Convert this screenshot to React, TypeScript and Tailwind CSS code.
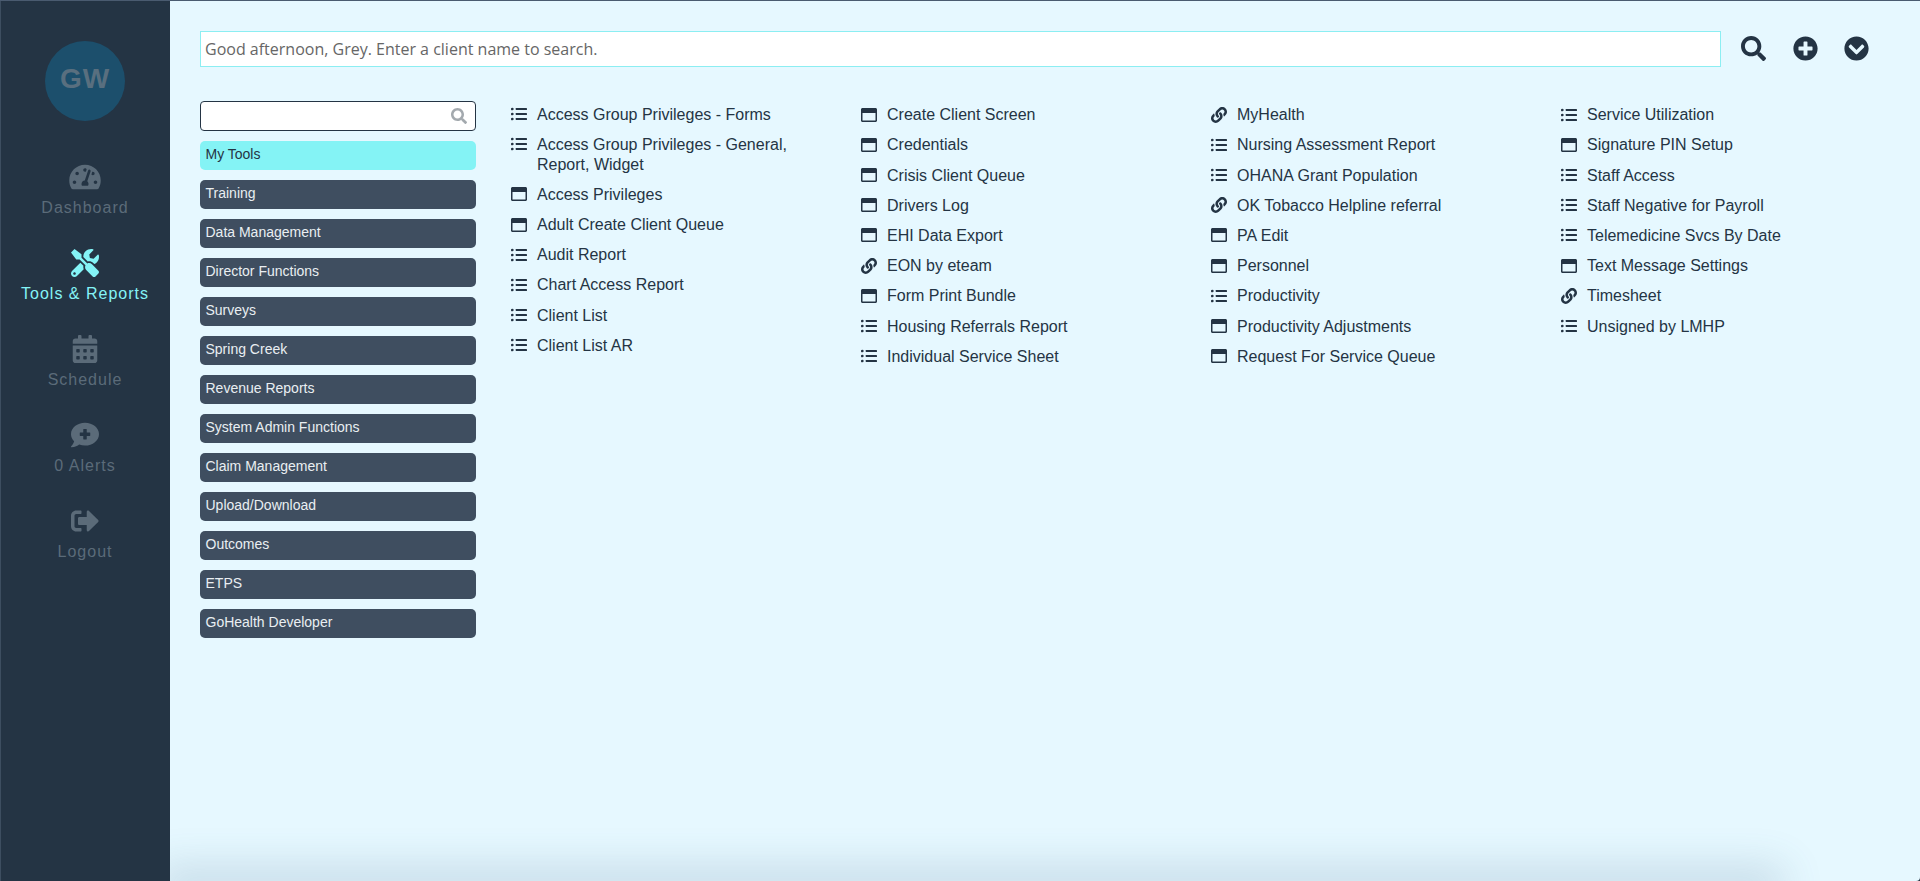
import { FaTachometerAlt, FaTools, FaCalendarAlt, FaCommentMedical, FaSignOutAlt, FaSearch, FaPlusCircle, FaChevronCircleDown, FaRegWindowMaximize, FaLink } from "react-icons/fa";

type Kind = "list" | "win" | "link";
type Row = [Kind, string];

const columns: { rows: Row[]; spacing: string }[] = [
  {
    spacing: "pt-[3.7px]",
    rows: [
      ["list", "Access Group Privileges - Forms"],
      ["list", "Access Group Privileges - General, Report, Widget"],
      ["win", "Access Privileges"],
      ["win", "Adult Create Client Queue"],
      ["list", "Audit Report"],
      ["list", "Chart Access Report"],
      ["list", "Client List"],
      ["list", "Client List AR"],
    ],
  },
  {
    spacing: "pt-[4.2px]",
    rows: [
      ["win", "Create Client Screen"],
      ["win", "Credentials"],
      ["win", "Crisis Client Queue"],
      ["win", "Drivers Log"],
      ["win", "EHI Data Export"],
      ["link", "EON by eteam"],
      ["win", "Form Print Bundle"],
      ["list", "Housing Referrals Report"],
      ["list", "Individual Service Sheet"],
    ],
  },
  {
    spacing: "pt-[4.2px]",
    rows: [
      ["link", "MyHealth"],
      ["list", "Nursing Assessment Report"],
      ["list", "OHANA Grant Population"],
      ["link", "OK Tobacco Helpline referral"],
      ["win", "PA Edit"],
      ["win", "Personnel"],
      ["list", "Productivity"],
      ["win", "Productivity Adjustments"],
      ["win", "Request For Service Queue"],
    ],
  },
  {
    spacing: "pt-[4.2px]",
    rows: [
      ["list", "Service Utilization"],
      ["win", "Signature PIN Setup"],
      ["list", "Staff Access"],
      ["list", "Staff Negative for Payroll"],
      ["list", "Telemedicine Svcs By Date"],
      ["win", "Text Message Settings"],
      ["link", "Timesheet"],
      ["list", "Unsigned by LMHP"],
    ],
  },
];

const navItems = [
  { label: "Dashboard", Icon: FaTachometerAlt },
  { label: "Tools & Reports", Icon: FaTools, active: true },
  { label: "Schedule", Icon: FaCalendarAlt },
  { label: "0 Alerts", Icon: FaCommentMedical },
  { label: "Logout", Icon: FaSignOutAlt },
];

const groups = [
  "Training",
  "Data Management",
  "Director Functions",
  "Surveys",
  "Spring Creek",
  "Revenue Reports",
  "System Admin Functions",
  "Claim Management",
  "Upload/Download",
  "Outcomes",
  "ETPS",
  "GoHealth Developer",
];

function ListIcon() {
  return (
    <svg viewBox="0 0 16 16" className="h-4 w-4" fill="currentColor">
      <circle cx="1.3" cy="3" r="1.35" />
      <circle cx="1.3" cy="8" r="1.35" />
      <circle cx="1.3" cy="13" r="1.35" />
      <rect x="4.7" y="2.1" width="11.3" height="1.8" rx="0.3" />
      <rect x="4.7" y="7.1" width="11.3" height="1.8" rx="0.3" />
      <rect x="4.7" y="12.1" width="11.3" height="1.8" rx="0.3" />
    </svg>
  );
}

function RowIcon({ kind }: { kind: Kind }) {
  if (kind === "list") return <ListIcon />;
  if (kind === "win") return <FaRegWindowMaximize className="h-4 w-4" />;
  return <FaLink className="h-4 w-4" />;
}

export default function App() {
  return (
    <div className="relative flex h-[881px] w-[1920px] overflow-hidden border-t border-[#4a5b70] bg-[#243444] font-['Liberation_Sans',Arial,sans-serif] text-[#243444]">
      <aside className="flex w-[170px] shrink-0 flex-col items-center bg-[#243444] pt-10 shadow-[inset_1px_0_0_#3d4e60]">
        <div className="flex h-20 w-20 items-center justify-center rounded-full bg-[#1c4f6c] pb-[4px] text-[28px] font-bold tracking-[1px] text-[#596f7f]">
          GW
        </div>
        <nav className="mt-[42px] flex w-full flex-col items-center gap-[26px]">
          {navItems.map(({ label, Icon, active }) => (
            <div
              key={label}
              className={`flex h-[60px] flex-col items-center tracking-[1px] ${active ? "text-[#84f3f6]" : "text-[#5b6b79]"}`}
            >
              <Icon className="h-7 w-8" />
              <span className="mt-[7px] text-base leading-5">{label}</span>
            </div>
          ))}
        </nav>
      </aside>
      <main className="relative flex-1 overflow-hidden rounded-br-[4px] bg-[#e6f8ff] pl-[30px] pt-[30px]">
        <div className="flex items-center">
          <div className="flex h-[36px] w-[1521px] items-center border border-[#8ceef2] bg-white pl-1 font-['Open_Sans',sans-serif] text-base text-[#666]">
            Good afternoon, Grey. Enter a client name to search.
          </div>
          <div className="flex items-center gap-[26px] pb-[1px] pl-5 text-[#243444]">
            <FaSearch className="mr-[1px] h-[25px] w-[25px]" />
            <FaPlusCircle className="h-[25px] w-[25px]" />
            <FaChevronCircleDown className="h-[25px] w-[25px]" />
          </div>
        </div>
        <div className="mt-[34px] flex">
          <div className="flex w-[276px] shrink-0 flex-col gap-[10px]">
            <div className="flex h-[30px] items-center justify-end rounded-[4px] border border-[#243444] bg-white pr-2 text-[#a3a9ae]">
              <FaSearch className="h-4 w-4" />
            </div>
            <div className="h-[29px] rounded-[5px] bg-[#84f3f5] pl-[5.5px] pt-[5px] text-sm leading-[17px] text-[#243444]">
              My Tools
            </div>
            {groups.map((g) => (
              <div
                key={g}
                className="h-[29px] rounded-[5px] bg-[#3f4e60] pl-[5.5px] pt-[5px] text-sm leading-[17px] text-[#e9eef2]"
              >
                {g}
              </div>
            ))}
          </div>
          <div className="ml-[35px] grid w-[1400px] grid-cols-4">
            {columns.map((col, i) => (
              <div key={i} className={`flex flex-col pr-[60px] ${col.spacing}`}>
                {col.rows.map(([kind, text]) => (
                  <div
                    key={text}
                    className={`flex text-base leading-5 ${i === 0 ? "mb-[10.15px]" : "mb-[10.2px]"}`}
                  >
                    <span className="flex h-5 w-[26px] shrink-0 items-center pb-[1px]">
                      <RowIcon kind={kind} />
                    </span>
                    <span>{text}</span>
                  </div>
                ))}
              </div>
            ))}
          </div>
        </div>
        <div className="absolute -bottom-[6px] left-0 h-[6px] w-[1600px] shadow-[0_0_40px_14px_rgba(60,100,130,0.2)]" />
      </main>
    </div>
  );
}
